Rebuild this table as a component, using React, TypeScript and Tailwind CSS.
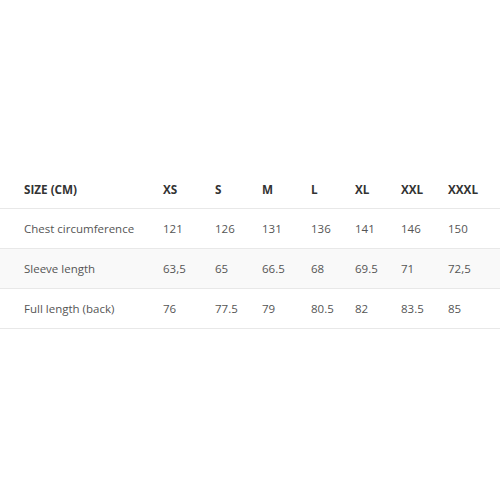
const sizes = ["XS", "S", "M", "L", "XL", "XXL", "XXXL"];

const rows = [
  { label: "Chest circumference", values: ["121", "126", "131", "136", "141", "146", "150"] },
  { label: "Sleeve length", values: ["63,5", "65", "66.5", "68", "69.5", "71", "72,5"] },
  { label: "Full length (back)", values: ["76", "77.5", "79", "80.5", "82", "83.5", "85"] },
];

const widths = ["w-[52px]", "w-[47px]", "w-[49px]", "w-[44px]", "w-[46px]", "w-[47px]", "w-[52px]"];

export default function App() {
  return (
    <div className="w-[500px] h-[500px] bg-white pt-[169px]" style={{ fontFamily: '"Open Sans", sans-serif' }}>
      <div className="flex items-center h-[40px] pt-[2px] border-b border-[#e8e8e8] text-[11.7px] font-bold text-[#333]">
        <div className="w-[163px] shrink-0 pl-[24px]">SIZE (CM)</div>
        {sizes.map((s, j) => (
          <div key={s} className={`${widths[j]} shrink-0`}>{s}</div>
        ))}
      </div>
      {rows.map((r, i) => (
        <div
          key={r.label}
          className={`flex items-center h-[40px] pt-[1px] border-b border-[#e8e8e8] text-[11.5px] text-[#555] ${i === 1 ? "bg-[#f9f9f9]" : "bg-white"}`}
        >
          <div className="w-[163px] shrink-0 pl-[24px]">{r.label}</div>
          {r.values.map((v, j) => (
            <div key={j} className={`${widths[j]} shrink-0`}>{v}</div>
          ))}
        </div>
      ))}
    </div>
  );
}
